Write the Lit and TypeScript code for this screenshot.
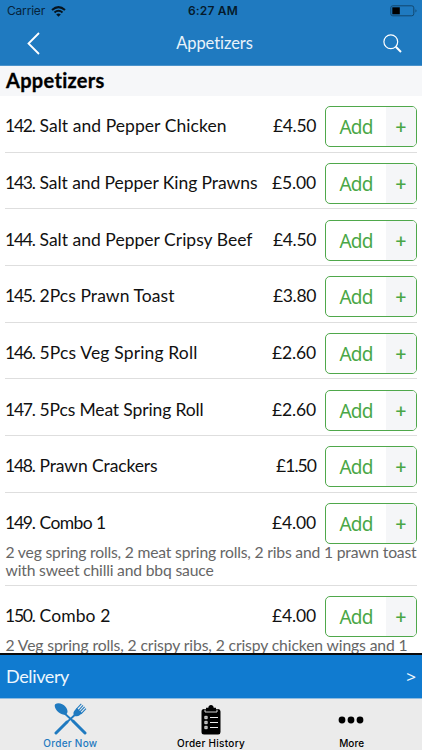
import { LitElement, html, css, svg, nothing } from "lit";
import { customElement, property } from "lit/decorators.js";

interface Item {
  no: string;
  name: string;
  nameWidth: number;
  price: string;
  priceWidth: number;
  notes?: [string, number][];
}

const ITEMS: Item[] = [
  { no: "142.", name: "Salt and Pepper Chicken", nameWidth: 187, price: "£4.50", priceWidth: 43 },
  { no: "143.", name: "Salt and Pepper King Prawns", nameWidth: 218, price: "£5.00", priceWidth: 44 },
  { no: "144.", name: "Salt and Pepper Cripsy Beef", nameWidth: 213, price: "£4.50", priceWidth: 43 },
  { no: "145.", name: "2Pcs Prawn Toast", nameWidth: 135, price: "£3.80", priceWidth: 43 },
  { no: "146.", name: "5Pcs Veg Spring Roll", nameWidth: 158, price: "£2.60", priceWidth: 44 },
  { no: "147.", name: "5Pcs Meat Spring Roll", nameWidth: 164, price: "£2.60", priceWidth: 44 },
  { no: "148.", name: "Prawn Crackers", nameWidth: 118, price: "£1.50", priceWidth: 40 },
  {
    no: "149.", name: "Combo 1", nameWidth: 66, price: "£4.00", priceWidth: 44,
    notes: [["2 veg spring rolls, 2 meat spring rolls, 2 ribs and 1 prawn toast", 411], ["with sweet chilli and bbq sauce", 208]],
  },
  {
    no: "150.", name: "Combo 2", nameWidth: 71, price: "£4.00", priceWidth: 44,
    notes: [["2 Veg spring rolls, 2 crispy ribs, 2 crispy chicken wings and 1", 402]],
  },
];

/** A single line of text, tracked so that it fills the given width. */
@customElement("fit-text")
class FitText extends LitElement {
  static styles = css`
    :host { display: inline-block; white-space: nowrap; }
    .run { display: inline-block; }
  `;
  @property() text = "";
  @property({ type: Number }) width = 0;

  async firstUpdated() {
    this.fit();
    await document.fonts.ready;
    this.fit();
  }

  private fit() {
    const run = this.renderRoot.querySelector<HTMLElement>(".run")!;
    run.style.letterSpacing = "0px";
    const gap = (this.width - run.getBoundingClientRect().width) / this.text.length;
    run.style.letterSpacing = `${gap}px`;
  }

  render() {
    return html`<span class="run">${this.text}</span>`;
  }
}

const fit = (text: string, width: number) => html`<fit-text .text=${text} .width=${width}></fit-text>`;

const cutlery = svg`
  <path d="M9 9 L20 19" stroke="currentColor" stroke-width="1.800"/>
  <path d="M19 18 L31 30" stroke="currentColor" stroke-width="3" stroke-linecap="round"/>
  <path d="M1.200 1.200 C4 -.7 9 .5 11.500 3.800 C14 7 14 9.500 12.600 11 C11 12.400 7.500 11.800 4.500 9.300 C1.500 6.800 -.2 3 1.200 1.200Z" fill="currentColor"/>
  <path d="M23 10 L12 20" stroke="currentColor" stroke-width="1.800"/>
  <path d="M13 19 L2 30" stroke="currentColor" stroke-width="3" stroke-linecap="round"/>
  <path d="M19.800 12.200 C19 10 19.500 8.500 21 7 L23 5 L28 10 L26 12 C24 13.500 22 14 19.800 12.200Z" fill="currentColor"/>
  <path d="M22 6.500 L27.300 .8 M24 8 L29 2.300 M25.400 9.300 L30.600 3.900 M27 10.800 L32 5.600" stroke="currentColor" stroke-width="1.100"/>`;

const clipboard = svg`
  <path d="M3 4 H5 V2.800 H7.300 C7.500 1 8.500 0 10 0 S12.500 1 12.700 2.800 H15 V4 H17.200 Q19.500 4 19.500 6.500 V27 Q19.500 29.500 17.200 29.500 H3 Q.5 29.500 .5 27 V6.500 Q.5 4 3 4Z" fill="currentColor"/>
  <path d="M4 4.500 V7 H16 V4.500" stroke="#ebebeb" stroke-width=".9"/>
  <path d="M9 12.500 H17 M9 17.500 H17 M9 22.500 H17" stroke="#ebebeb" stroke-width="1"/>
  <path d="M3.800 11.300h2.400v2.400h-2.400z M3.800 16.300h2.400v2.400h-2.400z M3.800 21.300h2.400v2.400h-2.400z" fill="#999" stroke="#ebebeb" stroke-width=".8"/>`;

@customElement("app-root")
class AppRoot extends LitElement {
  static styles = css`
    :host {
      display: flex; flex-direction: column; width: 422px; height: 750px; overflow: hidden;
      background: #fff; color: #000; font-family: Lato, "Liberation Sans", sans-serif;
    }
    svg { display: block; fill: none; }
    .top { flex: none; height: 65px; background: #1f7ac0; border-bottom: 1px solid #4b93cb; }
    .status {
      display: grid; grid-template-columns: 1fr auto 1fr; align-items: center; height: 22px; padding: 0 4px 0 7px;
      font: 12px/22px Inter, sans-serif; color: #06233b;
    }
    .carrier { display: flex; align-items: center; gap: 6px; }
    .time { font-weight: 600; color: #051a2c; padding-left: 1px; }
    .battery { justify-self: end; }
    .nav {
      display: grid; grid-template-columns: 1fr auto 1fr; align-items: center; height: 42px;
      padding: 0 20px 0 27px; color: #fff; font-size: 16.500px;
    }
    .title { line-height: 20px; padding-bottom: 1px; color: #e9f3fa; }
    .search { justify-self: end; }
    .heading {
      flex: none; height: 30px; padding-left: 6px; background: #f6f7f9; box-sizing: border-box;
      font-size: 20px; line-height: 28px; font-weight: 700; -webkit-text-stroke: .3px #000;
    }
    .list { flex: 1; min-height: 0; overflow: hidden; padding: 0 5px; }
    .item { border-bottom: 1px solid #dedede; box-sizing: border-box; height: 56.700px; padding-top: 10.200px; }
    .item.noted { height: 93px; }
    .line { display: flex; align-items: center; height: 41px; font-size: 17.500px; color: #111; }
    .name { flex: 1; display: flex; gap: 5px; padding-bottom: 2px; }
    .price { width: 45px; margin-right: 9px; padding-bottom: 2px; text-align: right; }
    .add {
      box-sizing: border-box; display: flex; width: 92px; height: 41px; border: 1px solid #4fa84b;
      border-radius: 5px; overflow: hidden; color: #4aa746;
    }
    .label { flex: 1; text-align: center; font: 19px/40px "Noto Sans", sans-serif; }
    .plus { width: 30px; background: #f5f6f8; text-align: center; font: 400 19px/41px Roboto, sans-serif; }
    .notes { font-size: 15.700px; line-height: 18px; color: #666; margin-top: -1px; padding-left: .5px; }
    .note { display: block; height: 18px; }
    .delivery {
      flex: none; display: flex; align-items: center; justify-content: space-between; box-sizing: border-box;
      height: 46px; padding: 0 6px 1px; border-top: 2px solid #0a0a0a; border-bottom: 1px solid #8fbce0;
      background: #107bd0; color: #eef7fd; font-size: 18px;
    }
    .arrow { font: 17px/20px "Noto Sans", sans-serif; padding-top: 2px; }
    .tabs { flex: none; display: grid; grid-template-columns: 1fr 1fr 1fr; height: 51px; background: #ebebeb; }
    .tab { display: flex; flex-direction: column; align-items: center; font: 500 10px/14px Inter, sans-serif; }
    .tab.active { color: #1f7ac0; }
    .glyph { display: flex; align-items: center; justify-content: center; box-sizing: border-box; height: 37px; padding-top: 4px; }
    .glyph.dots { padding: 4px 1px 0 0; }
  `;

  private item(i: Item) {
    return html`<div class="item ${i.notes ? "noted" : ""}">
      <div class="line">
        <span class="name">${fit(i.no, 29.500)}${fit(i.name, i.nameWidth)}</span>
        <span class="price">${fit(i.price, i.priceWidth)}</span>
        <div class="add"><span class="label">${fit("Add", 33)}</span><span class="plus">+</span></div>
      </div>
      ${i.notes ? html`<div class="notes">${i.notes.map(([t, w]) => html`<span class="note">${fit(t, w)}</span>`)}</div>` : nothing}
    </div>`;
  }

  render() {
    return html`
      <header class="top">
        <div class="status">
          <span class="carrier">${fit("Carrier", 38)}
            <svg width="15" height="11" viewBox="0 0 15 11" stroke="#06141f" stroke-width="2">
              <path d="M1 4 Q7.500 -1.800 14 4"/><path d="M3.500 6.600 Q7.500 3 11.500 6.600"/>
              <path d="M5.200 8.400 Q7.500 6.500 9.800 8.400 L7.500 10.800Z" fill="#06141f" stroke="none"/>
            </svg>
          </span>
          <span class="time">${fit("6:27 AM", 50)}</span>
          <svg class="battery" width="28" height="12" viewBox="0 0 28 12">
            <rect x=".8" y=".8" width="23" height="10" rx="2" stroke="#12486f"/>
            <rect x="2.300" y="2.300" width="7.500" height="7" fill="#000"/>
            <path d="M25.500 4.200 Q27.500 5.800 25.500 7.500Z" fill="#12486f"/>
          </svg>
        </div>
        <div class="nav">
          <svg width="13" height="23" viewBox="0 0 13 23" stroke="#fff" stroke-width="1.800"><path d="M12 1 L1.500 11.500 L12 22"/></svg>
          <span class="title">${fit("Appetizers", 77)}</span>
          <svg class="search" width="19" height="19" viewBox="0 0 19 19" stroke="#fff">
            <circle cx="7.800" cy="7.800" r="6.900" stroke-width="1.200"/><path d="M12.800 12.800 L18 18" stroke-width="2"/>
          </svg>
        </div>
      </header>
      <div class="heading">${fit("Appetizers", 99)}</div>
      <main class="list">${ITEMS.map((i) => this.item(i))}</main>
      <div class="delivery">${fit("Delivery", 63)}<span class="arrow">&gt;</span></div>
      <nav class="tabs">
        <div class="tab active"><span class="glyph"><svg width="33" height="33" viewBox="0 0 33 33">${cutlery}</svg></span>${fit("Order Now", 54)}</div>
        <div class="tab"><span class="glyph"><svg width="20" height="30" viewBox="0 0 20 30">${clipboard}</svg></span>${fit("Order History", 68)}</div>
        <div class="tab"><span class="glyph dots"><svg width="26" height="8" viewBox="0 0 26 8"><circle cx="4" cy="4" r="3.400" fill="#000"/><circle cx="13" cy="4" r="3.400" fill="#000"/><circle cx="22" cy="4" r="3.400" fill="#000"/></svg></span>${fit("More", 25)}</div>
      </nav>`;
  }
}
